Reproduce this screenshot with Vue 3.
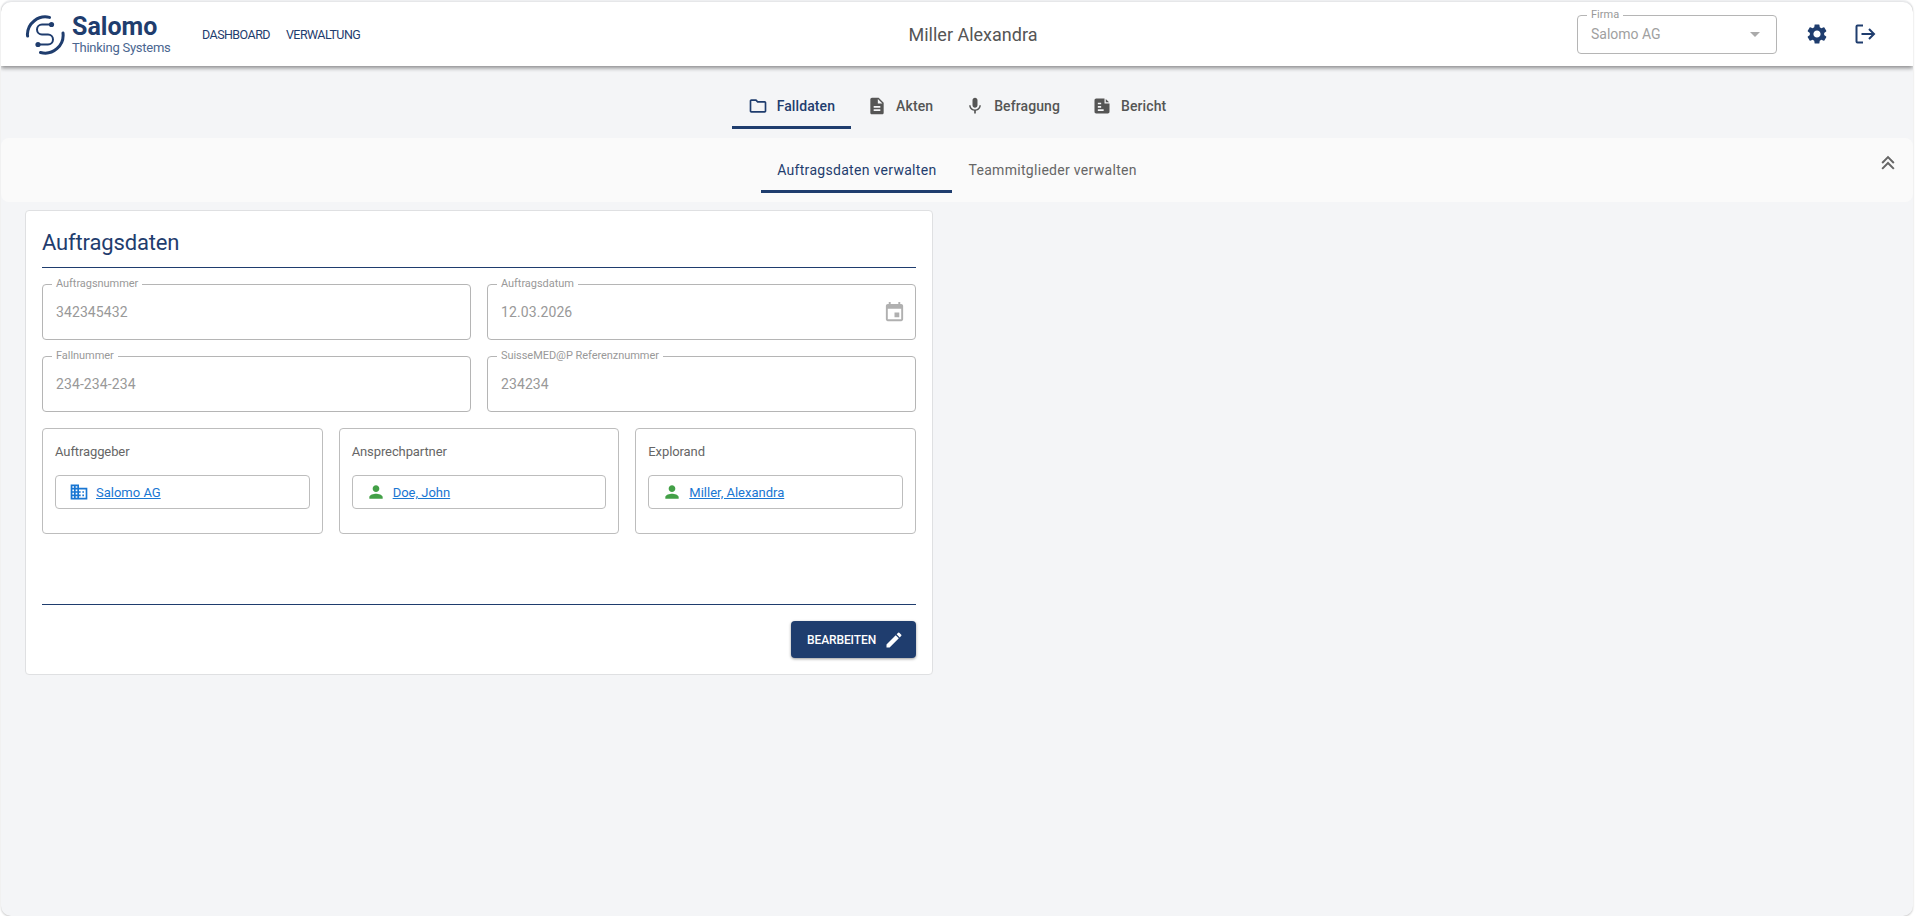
<script setup>
const tabs = [
  { label: 'Falldaten', icon: 'folder', active: true },
  { label: 'Akten', icon: 'file' },
  { label: 'Befragung', icon: 'mic' },
  { label: 'Bericht', icon: 'note' }
]

const icons = {
  folder: 'M9.17 6l2 2H20v10H4V6h5.17M10 4H4c-1.1 0-1.99.9-1.99 2L2 18c0 1.1.9 2 2 2h16c1.1 0 2-.9 2-2V8c0-1.1-.9-2-2-2h-8l-2-2z',
  file: 'M14 2H6c-1.1 0-1.99.9-1.99 2L4 20c0 1.1.89 2 1.99 2H18c1.1 0 2-.9 2-2V8l-6-6zm2 16H8v-2h8v2zm0-4H8v-2h8v2zm-3-5V3.5L18.5 9H13z',
  mic: 'M12 14c1.66 0 2.99-1.34 2.99-3L15 5c0-1.66-1.34-3-3-3S9 3.34 9 5v6c0 1.66 1.34 3 3 3zm5.3-3c0 3-2.54 5.1-5.3 5.1S6.7 14 6.7 11H5c0 3.41 2.72 6.23 6 6.72V21h2v-3.28c3.28-.48 6-3.3 6-6.72h-1.7z',
  note: 'M5 3h10v6h6v10c0 1.1-.9 2-2 2H5c-1.1 0-2-.9-2-2V5c0-1.1.9-2 2-2zm11.5.5L20.5 7.5H16.5V3.5zM7 8v2h4V8H7zm0 4v2h4v-2H7zm0 4v2h7v-2H7z',
  person: 'M12 12c2.21 0 4-1.79 4-4s-1.79-4-4-4-4 1.79-4 4 1.79 4 4 4zm0 2c-2.67 0-8 1.34-8 4v2h16v-2c0-2.66-5.33-4-8-4z',
  domain: 'M12 7V3H2v18h20V7H12zM6 19H4v-2h2v2zm0-4H4v-2h2v2zm0-4H4V9h2v2zm0-4H4V5h2v2zm4 12H8v-2h2v2zm0-4H8v-2h2v2zm0-4H8V9h2v2zm0-4H8V5h2v2zm10 12h-8v-2h2v-2h-2v-2h2v-2h-2V9h8v10zm-2-8h-2v2h2v-2zm0 4h-2v2h2v-2z'
}

const fields = [
  { label: 'Auftragsnummer', value: '342345432' },
  { label: 'Auftragsdatum', value: '12.03.2026', date: true },
  { label: 'Fallnummer', value: '234-234-234' },
  { label: 'SuisseMED@P Referenznummer', value: '234234' }
]

const parties = [
  { label: 'Auftraggeber', name: 'Salomo AG', icon: 'domain', color: '#1976d2' },
  { label: 'Ansprechpartner', name: 'Doe, John', icon: 'person', color: '#43a047' },
  { label: 'Explorand', name: 'Miller, Alexandra', icon: 'person', color: '#43a047' }
]
</script>

<template>
  <div class="page">
    <header class="topbar">
      <div class="brand">
        <svg class="logo" viewBox="0 0 40 40" width="40" height="40" fill="none" stroke="#1f3d6e">
          <path d="M24.5 2.4 A18 18 0 0 0 2.4 19.5 L2.6 21" stroke-width="3" stroke-linecap="round" />
          <path d="M38 18 A18 18 0 0 1 15.5 37.5" stroke-width="3" stroke-linecap="round" />
          <path d="M26 9.5 H17 A5 5 0 0 0 17 19.5 H23 A5 5 0 0 1 23 29.5 H13.5" stroke-width="2" />
          <circle cx="26.5" cy="9.5" r="2.6" fill="#1f3d6e" stroke="none" />
          <circle cx="13" cy="29.5" r="2.6" fill="#1f3d6e" stroke="none" />
        </svg>
        <div class="brand-text">
          <div class="brand-name">Salomo</div>
          <div class="brand-sub">Thinking Systems</div>
        </div>
      </div>
      <nav class="mainnav">
        <a>DASHBOARD</a>
        <a>VERWALTUNG</a>
      </nav>
      <div class="person-name">Miller Alexandra</div>
      <div class="actions">
        <div class="firma">
          <span class="firma-label">Firma</span>
          <span class="firma-value">Salomo AG</span>
          <span class="firma-arrow"></span>
        </div>
        <svg class="act-icon gear" viewBox="0 0 24 24" width="24" height="24">
          <path fill="#1f3d6e" d="M19.14 12.94c.04-.3.06-.61.06-.94 0-.32-.02-.64-.07-.94l2.03-1.58a.49.49 0 0 0 .12-.61l-1.92-3.32a.488.488 0 0 0-.59-.22l-2.39.96c-.5-.38-1.03-.7-1.62-.94l-.36-2.54a.484.484 0 0 0-.48-.41h-3.84c-.24 0-.43.17-.47.41l-.36 2.54c-.59.24-1.13.57-1.62.94l-2.39-.96c-.22-.08-.47 0-.59.22L2.74 8.87c-.12.21-.08.47.12.61l2.03 1.58c-.05.3-.09.63-.09.94s.02.64.07.94l-2.03 1.58a.49.49 0 0 0-.12.61l1.92 3.32c.12.22.37.29.59.22l2.39-.96c.5.38 1.03.7 1.62.94l.36 2.54c.05.24.24.41.48.41h3.84c.24 0 .44-.17.47-.41l.36-2.54c.59-.24 1.13-.56 1.62-.94l2.39.96c.22.08.47 0 .59-.22l1.92-3.32c.12-.22.07-.47-.12-.61l-2.01-1.58zM12 15.6c-1.98 0-3.6-1.62-3.6-3.6s1.62-3.6 3.6-3.6 3.6 1.62 3.6 3.6-1.62 3.6-3.6 3.6z" />
        </svg>
        <svg class="act-icon" viewBox="0 0 24 24" width="24" height="24" fill="none" stroke="#1f3d6e" stroke-width="2">
          <path d="M10 3.5H4.5a1 1 0 0 0-1 1v15a1 1 0 0 0 1 1H10" />
          <path d="M8.5 12H21M16 7l5 5-5 5" />
        </svg>
      </div>
    </header>

    <nav class="tabs">
      <a v-for="tab in tabs" :key="tab.label" class="tab" :class="{ active: tab.active }">
        <svg viewBox="0 0 24 24" width="20" height="20"><path :d="icons[tab.icon]" /></svg>
        <span>{{ tab.label }}</span>
      </a>
    </nav>

    <div class="subbar">
      <a class="subtab active">Auftragsdaten verwalten</a>
      <a class="subtab">Teammitglieder verwalten</a>
      <svg class="collapse" viewBox="0 0 24 24" width="20" height="20" fill="none" stroke="#666" stroke-width="2.4">
        <path d="M5 12l7-7 7 7M5 19l7-7 7 7" />
      </svg>
    </div>

    <main class="content">
      <section class="card">
        <h2>Auftragsdaten</h2>
        <div class="field-grid">
          <div v-for="f in fields" :key="f.label" class="field">
            <span class="field-label">{{ f.label }}</span>
            <span class="field-value">{{ f.value }}</span>
            <svg v-if="f.date" class="cal" viewBox="0 0 24 24" width="23" height="23">
              <path fill="#b0b0b0" d="M17 12h-5v5h5v-5zM16 1v2H8V1H6v2H5c-1.11 0-1.99.9-1.99 2L3 19c0 1.1.89 2 2 2h14c1.1 0 2-.9 2-2V5c0-1.1-.9-2-2-2h-1V1h-2zm3 18H5V8h14v11z" />
            </svg>
          </div>
        </div>
        <div class="party-grid">
          <div v-for="p in parties" :key="p.label" class="party">
            <div class="party-label">{{ p.label }}</div>
            <div class="party-link">
              <svg viewBox="0 0 24 24" width="20" height="20"><path :fill="p.color" :d="icons[p.icon]" /></svg>
              <a>{{ p.name }}</a>
            </div>
          </div>
        </div>
        <div class="card-foot">
          <button class="edit-btn">
            BEARBEITEN
            <svg viewBox="0 0 24 24" width="20" height="20">
              <path fill="#fff" d="M3 17.25V21h3.75L17.81 9.94l-3.75-3.75L3 17.25zM20.71 7.04a1 1 0 0 0 0-1.41l-2.34-2.34a1 1 0 0 0-1.41 0l-1.83 1.83 3.75 3.75 1.83-1.83z" />
            </svg>
          </button>
        </div>
      </section>
    </main>
  </div>
</template>

<style>
html, body {
  margin: 0;
  background: #fff;
}
</style>

<style scoped>
.page {
  box-sizing: border-box;
  height: 916px;
  margin: 0 3px 0 1px;
  padding-top: 2px;
  border-radius: 10px;
  box-shadow: 0 1px 2px rgba(0, 0, 0, 0.22);
  background: #f4f5f7;
  display: flex;
  flex-direction: column;
  font-family: Roboto, "Noto Sans", sans-serif;
  color: #555;
  overflow: hidden;
}

.topbar {
  height: 64px;
  flex-shrink: 0;
  background: #fff;
  border-radius: 10px 10px 0 0;
  box-shadow: 0 2px 4px rgba(0, 0, 0, 0.45);
  display: grid;
  grid-template-columns: 1fr auto 1fr;
  position: relative;
  align-items: center;
}

.brand {
  display: flex;
  align-items: center;
  gap: 7px;
  padding-left: 24px;
  position: absolute;
  left: 0;
  top: 12px;
}

.logo {
  flex-shrink: 0;
}

.brand-name {
  font-size: 25px;
  font-weight: 700;
  line-height: 26px;
  color: #1f3d6e;
}

.brand-sub {
  font-size: 13px;
  line-height: 14px;
  margin-top: 1px;
  color: #4a6690;
  letter-spacing: -0.25px;
}

.mainnav {
  display: flex;
  gap: 16px;
  padding-left: 201px;
  font-size: 12.5px;
  color: #1f3d6e;
  letter-spacing: -0.55px;
}

.person-name {
  font-size: 18px;
  color: #555;
  grid-column: 2;
  padding-left: 32px;
}

.actions {
  grid-column: 3;
  display: flex;
  align-items: center;
  justify-content: flex-end;
  padding-right: 36px;
}

.firma {
  box-sizing: border-box;
  width: 200px;
  height: 39px;
  margin-right: 28px;
  border: 1px solid #b5b5b5;
  border-radius: 4px;
  padding: 0 13px;
  display: flex;
  align-items: center;
  justify-content: space-between;
  position: relative;
}

.firma-label {
  position: absolute;
  top: -8px;
  left: 9px;
  padding: 0 4px;
  background: #fff;
  font-size: 11px;
  line-height: 13px;
  color: #999;
}

.firma-value {
  font-size: 14px;
  color: #a0a0a0;
}

.firma-arrow {
  margin-right: 3px;
  border-left: 5px solid transparent;
  border-right: 5px solid transparent;
  border-top: 5px solid #aaa;
}

.act-icon + .act-icon {
  margin-left: 24px;
}

.tabs {
  height: 72px;
  flex-shrink: 0;
  display: flex;
  justify-content: center;
}

.tab {
  box-sizing: border-box;
  height: 63px;
  padding: 30px 16px 0;
  display: flex;
  align-items: flex-start;
  gap: 9px;
  font-size: 14px;
  line-height: 20px;
  font-weight: 500;
  letter-spacing: 0.1px;
  color: #555;
  border-bottom: 3px solid transparent;
}

.tab svg {
  fill: #555;
  flex-shrink: 0;
}

.tab.active {
  color: #1f3d6e;
  border-bottom-color: #1f3d6e;
}

.tab.active svg {
  fill: #1f3d6e;
}

.subbar {
  height: 64px;
  flex-shrink: 0;
  background: #fafafa;
  border-radius: 8px;
  display: flex;
  justify-content: center;
  position: relative;
}

.subtab {
  box-sizing: border-box;
  height: 55px;
  padding: 22px 16px 0;
  font-size: 14px;
  line-height: 20px;
  letter-spacing: 0.3px;
  color: #666;
  border-bottom: 3px solid transparent;
}

.subtab.active {
  color: #1f3d6e;
  border-bottom-color: #1f3d6e;
}

.collapse {
  position: absolute;
  right: 15px;
  top: 15px;
}

.content {
  padding: 8px 24px;
}

.card {
  box-sizing: border-box;
  width: 908px;
  height: 465px;
  background: #fff;
  border: 1px solid #dfe0e2;
  border-radius: 4px;
  padding: 16px;
  display: flex;
  flex-direction: column;
}

h2 {
  margin: 0;
  height: 40px;
  line-height: 32px;
  font-size: 22px;
  font-weight: 400;
  letter-spacing: -0.15px;
  color: #1f3d6e;
  border-bottom: 1px solid #1f3d6e;
}

.field-grid {
  display: grid;
  grid-template-columns: 1fr 1fr;
  gap: 16px;
  margin-top: 16px;
}

.field {
  box-sizing: border-box;
  height: 56px;
  border: 1px solid #b5b5b5;
  border-radius: 4px;
  padding: 0 13px;
  display: flex;
  align-items: center;
  justify-content: space-between;
  position: relative;
}

.field-label {
  position: absolute;
  top: -8px;
  left: 9px;
  padding: 0 4px;
  background: #fff;
  font-size: 11px;
  line-height: 13px;
  letter-spacing: -0.05px;
  color: #999;
}

.field-value {
  font-size: 14px;
  letter-spacing: 0.1px;
  color: #999;
}

.cal {
  margin-right: -3.5px;
}

.party-grid {
  display: grid;
  grid-template-columns: repeat(3, 1fr);
  gap: 16px;
  margin-top: 16px;
}

.party {
  box-sizing: border-box;
  height: 106px;
  border: 1px solid #bdbdbd;
  border-radius: 4px;
  padding: 14px 12px;
}

.party-label {
  font-size: 13px;
  line-height: 18px;
  letter-spacing: -0.1px;
  color: #666;
}

.party-link {
  box-sizing: border-box;
  height: 34px;
  margin-top: 14px;
  border: 1px solid #bdbdbd;
  border-radius: 4px;
  padding-left: 13px;
  display: flex;
  align-items: center;
  gap: 7px;
}

.party-link a {
  font-size: 13px;
  color: #1976d2;
  text-decoration: underline;
}

.card-foot {
  margin-top: auto;
  border-top: 1px solid #1f3d6e;
  padding-top: 16px;
  display: flex;
  justify-content: flex-end;
}

.edit-btn {
  box-sizing: border-box;
  width: 125px;
  height: 37px;
  padding: 0 0 0 16px;
  border: 0;
  border-radius: 4px;
  background: #1f3d6e;
  box-shadow: 0 1px 3px rgba(0, 0, 0, 0.4);
  color: #fff;
  font-family: inherit;
  font-size: 12px;
  font-weight: 500;
  letter-spacing: -0.1px;
  display: flex;
  align-items: center;
  gap: 8px;
}
</style>
